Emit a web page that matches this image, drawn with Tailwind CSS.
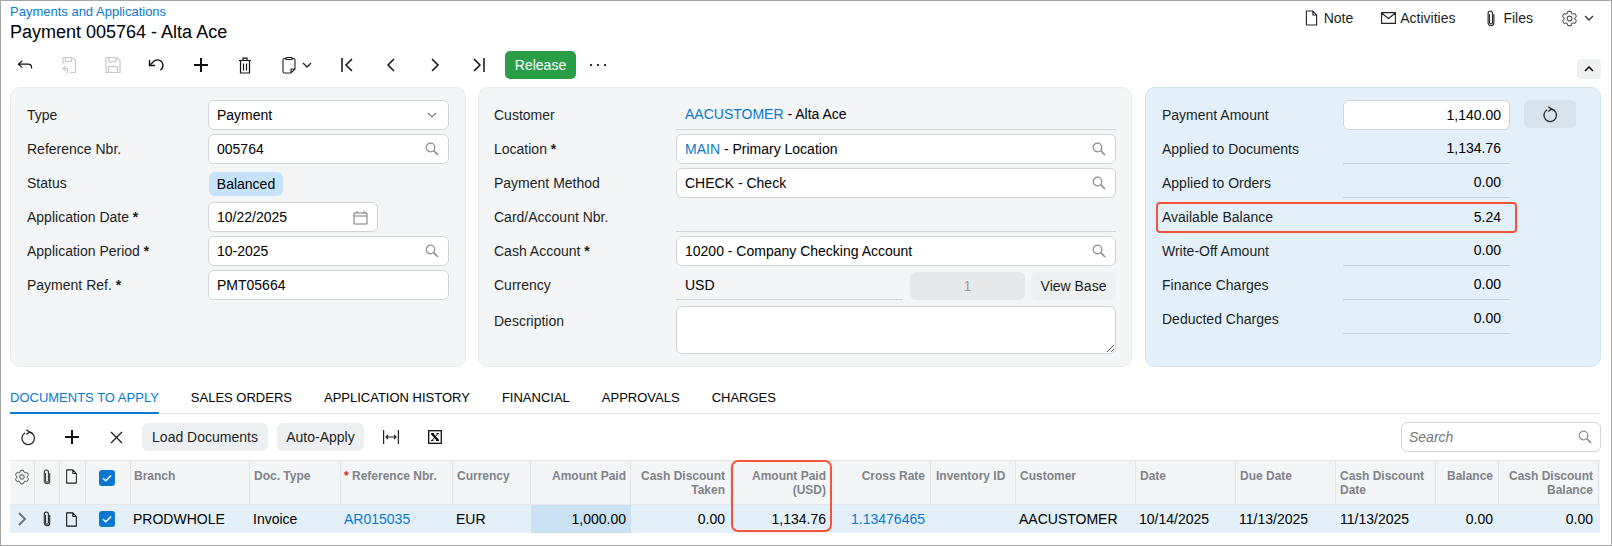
<!DOCTYPE html>
<html>
<head>
<meta charset="utf-8">
<script src="https://cdn.jsdelivr.net/npm/@tailwindcss/browser@4"></script>
<title>Payment 005764</title>
</head>
<body class="bg-white">
<!-- shared icons -->
<svg class="hidden">
    <symbol id="i-search" viewBox="0 0 14 14"><circle cx="5.5" cy="5.5" r="4.300" fill="none" stroke="currentColor" stroke-width="1.200"/><path d="M8.700 8.700 13 13" fill="none" stroke="currentColor" stroke-width="1.700"/></symbol>
    <symbol id="i-doc" viewBox="0 0 14 17"><path d="M1.5 1h7l4 4.2V16h-11zM8.5 1v4.2h4" fill="none" stroke="currentColor" stroke-width="1.2" stroke-linejoin="round"/></symbol>
    <symbol id="i-clip" viewBox="0 0 10 17"><path d="M3.5 4.5v8a1.5 1.5 0 0 0 3 0V3.2a2.2 2.2 0 0 0-4.400 0v9.600a2.900 2.900 0 0 0 5.800 0V4.500" fill="none" stroke="currentColor" stroke-width="1.100" stroke-linecap="round"/></symbol>
    <symbol id="i-gear" viewBox="0 0 24 24"><path d="M9.594 3.94c.09-.542.56-.94 1.11-.94h2.593c.55 0 1.02.398 1.11.94l.213 1.281c.063.374.313.686.645.87.074.04.147.083.22.127.325.196.72.257 1.075.124l1.217-.456a1.125 1.125 0 0 1 1.37.49l1.296 2.247a1.125 1.125 0 0 1-.26 1.431l-1.003.827c-.293.241-.438.613-.43.992a7.723 7.723 0 0 1 0 .255c-.008.378.137.75.43.991l1.004.827c.424.35.534.955.26 1.43l-1.298 2.247a1.125 1.125 0 0 1-1.369.491l-1.217-.456c-.355-.133-.75-.072-1.076.124a6.47 6.47 0 0 1-.22.128c-.331.183-.581.495-.644.869l-.213 1.281c-.09.543-.56.94-1.11.94h-2.594c-.55 0-1.019-.398-1.11-.94l-.213-1.281c-.062-.374-.312-.686-.644-.87a6.52 6.52 0 0 1-.22-.127c-.325-.196-.72-.257-1.076-.124l-1.217.456a1.125 1.125 0 0 1-1.369-.49l-1.297-2.247a1.125 1.125 0 0 1 .26-1.431l1.004-.827c.292-.24.437-.613.43-.991a6.932 6.932 0 0 1 0-.255c.007-.38-.138-.751-.43-.992l-1.004-.827a1.125 1.125 0 0 1-.26-1.43l1.297-2.247a1.125 1.125 0 0 1 1.37-.491l1.216.456c.356.133.751.072 1.076-.124.072-.044.146-.086.22-.128.332-.183.582-.495.644-.869l.214-1.28Z" fill="none" stroke="currentColor" stroke-width="1.300"/><circle cx="12" cy="12" r="3" fill="none" stroke="currentColor" stroke-width="1.300"/></symbol>
    <symbol id="i-refresh" viewBox="0 0 16 16"><path d="M5.200 3.200a6.300 6.300 0 1 0 3.800-.700" fill="none" stroke="currentColor" stroke-width="1.300"/><path d="M6.300 .3 9.500 2.500 6.300 5" fill="none" stroke="currentColor" stroke-width="1.300"/></symbol>
    <symbol id="i-check" viewBox="0 0 16 16"><rect width="16" height="16" rx="3" fill="#0a78d0"/><path d="m4 8.200 2.800 2.600L12 5.400" fill="none" stroke="#fff" stroke-width="1.500"/></symbol>
</svg>

<div class="w-[1612px] h-[546px] border border-[#a6a6a6] overflow-hidden font-['Liberation_Sans',Arial,sans-serif] text-[14px] text-[#1c1f24]">

    <!-- header -->
    <div class="h-[50px] pl-[9px] pr-[17px] flex justify-between items-start">
        <div>
            <a class="block mt-[3px] text-[13px] leading-[16px] text-[#0a78d0]">Payments and Applications</a>
            <h1 class="mt-[1px] text-[18px] leading-[22px] text-black">Payment 005764 - Alta Ace</h1>
        </div>
        <div class="h-[34px] flex items-center">
            <svg class="w-[13px] h-[16px] text-[#222]"><use href="#i-doc"/></svg>
            <span class="ml-[6px]">Note</span>
            <svg class="ml-[28px] w-[15px] h-[12px] text-[#222]" viewBox="0 0 15 12"><path d="M.6.600h13.800v10.800H.6zM.6 1l6.900 5.500L14.400 1" fill="none" stroke="currentColor" stroke-width="1.100"/></svg>
            <span class="ml-[4px]">Activities</span>
            <svg class="ml-[31px] w-[10px] h-[17px] text-[#222]"><use href="#i-clip"/></svg>
            <span class="ml-[7px]">Files</span>
            <svg class="ml-[27px] w-[19px] h-[19px] text-[#555]"><use href="#i-gear"/></svg>
            <svg class="ml-[5px] w-[10px] h-[6px] text-[#333]" viewBox="0 0 10 6"><path d="m1 1 4 4 4-4" fill="none" stroke="currentColor" stroke-width="1.300"/></svg>
        </div>
    </div>

    <!-- main toolbar -->
    <div class="h-[28px] pl-[2px] pr-[10px] flex items-center">
        <button class="w-[44px] flex justify-center"><svg class="w-[16px] h-[14px]" viewBox="0 0 18 16"><path d="M6 3 1.500 7 6 11M1.500 7H13a3.500 3.500 0 0 1 3.500 3.500V12" fill="none" stroke="#111" stroke-width="1.400"/></svg></button>
        <button class="w-[44px] flex justify-center"><svg class="w-[16px] h-[18px]" viewBox="0 0 16 18"><path d="M2 8V1.500h9L14.500 4.500V16.500H9M4.500 1.500v4h6v-4" fill="none" stroke="#c9cbd0" stroke-width="1.200"/><path d="M5 10 2 12.500 5 15M2 12.500h4.500V17" fill="none" stroke="#c9cbd0" stroke-width="1.200"/></svg></button>
        <button class="w-[44px] flex justify-center"><svg class="w-[16px] h-[18px]" viewBox="0 0 16 18"><path d="M1 1.500h10.500L15 4.800V16.500H1zM4 1.500v4.500h7V1.500M3.500 16.500V10.500h9v6" fill="none" stroke="#cbc6cc" stroke-width="1.200"/></svg></button>
        <button class="w-[44px] flex justify-center"><svg class="w-[18px] h-[16px]" viewBox="0 0 18 16"><path d="M1.500 3v5.500H7" fill="none" stroke="#111" stroke-width="1.400"/><path d="M1.800 8.300 5.300 4.800a5.500 5.500 0 1 1 7 8.300" fill="none" stroke="#111" stroke-width="1.400"/></svg></button>
        <button class="w-[44px] flex justify-center"><svg class="w-[16px] h-[16px]" viewBox="0 0 16 16"><path d="M8 1v14M1 8h14" stroke="#111" stroke-width="2"/></svg></button>
        <button class="w-[44px] flex justify-center"><svg class="w-[14px] h-[17px]" viewBox="0 0 14 17"><path d="M1 3.500h12M5 3.500V1.200h4v2.300M2.500 3.500V16h9V3.500M5.500 6.500v7M8.500 6.500v7" fill="none" stroke="#111" stroke-width="1.200"/></svg></button>
        <button class="w-[57px] pl-[15px] flex items-center"><svg class="w-[14px] h-[18px]" viewBox="0 0 14 18"><path d="M4 2.500H2.500A1.500 1.500 0 0 0 1 4v11.500A1.500 1.500 0 0 0 2.500 17H9l4-4V4a1.500 1.500 0 0 0-1.500-1.500H10M4 1.500h6v2H4zM9 17v-4h4" fill="none" stroke="#222" stroke-width="1.100"/></svg><svg class="ml-[6px] w-[10px] h-[6px]" viewBox="0 0 10 6"><path d="m1 1 4 4 4-4" fill="none" stroke="#222" stroke-width="1.300"/></svg></button>
        <button class="w-[45px] flex justify-center"><svg class="w-[14px] h-[14px]" viewBox="0 0 14 14"><path d="M2 0v14M12 1 6 7l6 6" fill="none" stroke="#111" stroke-width="1.500"/></svg></button>
        <button class="w-[44px] pr-[1px] flex justify-center"><svg class="w-[9px] h-[14px]" viewBox="0 0 9 14"><path d="M8 1 2 7l6 6" fill="none" stroke="#111" stroke-width="1.500"/></svg></button>
        <button class="w-[44px] flex justify-center"><svg class="w-[9px] h-[14px]" viewBox="0 0 9 14"><path d="m1 1 6 6-6 6" fill="none" stroke="#111" stroke-width="1.500"/></svg></button>
        <button class="w-[44px] flex justify-center"><svg class="w-[14px] h-[14px]" viewBox="0 0 14 14"><path d="M12 0v14M2 1l6 6-6 6" fill="none" stroke="#111" stroke-width="1.500"/></svg></button>
        <button class="ml-[4px] w-[71px] h-[28px] rounded-[5px] bg-[#2a9d47] text-white text-center">Release</button>
        <button class="w-[44px] flex justify-center gap-[5px]">
            <span class="w-[2px] h-[2px] bg-[#333]"></span><span class="w-[2px] h-[2px] bg-[#333]"></span><span class="w-[2px] h-[2px] bg-[#333]"></span>
        </button>
        <button class="ml-auto self-end w-[24px] h-[20px] rounded-[4px] bg-[#f0f1f3] flex items-center justify-center"><svg class="w-[10px] h-[6px]" viewBox="0 0 10 6"><path d="m1 5 4-4 4 4" fill="none" stroke="#111" stroke-width="1.600"/></svg></button>
    </div>

    <!-- form panels -->
    <div class="mt-[8px] h-[280px] pl-[9px] flex">
        <div class="w-[456px] rounded-[10px] border border-[#eaecef] bg-[#f4f5f7] pl-[16px] pt-[12px]">
            <div class="flex items-center h-[30px] mb-[4px]">
                <span class="w-[181px]">Type</span>
                <div class="w-[241px] h-[30px] pl-[8px] pr-[11px] flex items-center justify-between bg-white border border-[#d2d4d9] rounded-[6px] text-black">Payment<svg class="w-[10px] h-[6px] text-[#777]" viewBox="0 0 10 6"><path d="m1 1 4 4 4-4" fill="none" stroke="currentColor" stroke-width="1.100"/></svg></div>
            </div>
            <div class="flex items-center h-[30px] mb-[4px]">
                <span class="w-[181px]">Reference Nbr.</span>
                <div class="w-[241px] h-[30px] pl-[8px] pr-[9px] flex items-center justify-between bg-white border border-[#d2d4d9] rounded-[6px] text-black">005764<svg class="w-[14px] h-[14px] text-[#8b8f95]"><use href="#i-search"/></svg></div>
            </div>
            <div class="flex items-center h-[30px] mb-[4px]">
                <span class="w-[181px]">Status</span>
                <span class="ml-[1px] mt-[2px] w-[74px] h-[24px] rounded-[6px] bg-[#c5e4fb] text-black flex items-center justify-center">Balanced</span>
            </div>
            <div class="flex items-center h-[30px] mb-[4px]">
                <span class="w-[181px]">Application Date <b>*</b></span>
                <div class="w-[170px] h-[30px] pl-[8px] pr-[9px] flex items-center justify-between bg-white border border-[#d2d4d9] rounded-[6px] text-black">10/22/2025<svg class="w-[15px] h-[15px] text-[#777]" viewBox="0 0 15 15"><path d="M1 3h13v11H1zM1 6h13M4 1v2M11 1v2" fill="none" stroke="currentColor" stroke-width="1"/></svg></div>
            </div>
            <div class="flex items-center h-[30px] mb-[4px]">
                <span class="w-[181px]">Application Period <b>*</b></span>
                <div class="w-[241px] h-[30px] pl-[8px] pr-[9px] flex items-center justify-between bg-white border border-[#d2d4d9] rounded-[6px] text-black">10-2025<svg class="w-[14px] h-[14px] text-[#8b8f95]"><use href="#i-search"/></svg></div>
            </div>
            <div class="flex items-center h-[30px] mb-[4px]">
                <span class="w-[181px]">Payment Ref. <b>*</b></span>
                <div class="w-[241px] h-[30px] pl-[8px] pr-[9px] flex items-center bg-white border border-[#d2d4d9] rounded-[6px] text-black">PMT05664</div>
            </div>
        </div>

        <div class="ml-[12px] w-[654px] rounded-[10px] border border-[#eaecef] bg-[#f4f5f7] pl-[15px] pt-[12px]">
            <div class="flex items-center h-[30px] mb-[4px]">
                <span class="w-[182px]">Customer</span>
                <div class="w-[440px] h-[30px] pl-[9px] flex items-center border-b border-[#d2d4d9] text-black"><a class="text-[#0a78d0]">AACUSTOMER</a>&nbsp;- Alta Ace</div>
            </div>
            <div class="flex items-center h-[30px] mb-[4px]">
                <span class="w-[182px]">Location <b>*</b></span>
                <div class="w-[440px] h-[30px] pl-[8px] pr-[9px] flex items-center justify-between bg-white border border-[#d2d4d9] rounded-[6px] text-black"><span><a class="text-[#0a78d0]">MAIN</a> - Primary Location</span><svg class="w-[14px] h-[14px] text-[#8b8f95]"><use href="#i-search"/></svg></div>
            </div>
            <div class="flex items-center h-[30px] mb-[4px]">
                <span class="w-[182px]">Payment Method</span>
                <div class="w-[440px] h-[30px] pl-[8px] pr-[9px] flex items-center justify-between bg-white border border-[#d2d4d9] rounded-[6px] text-black">CHECK - Check<svg class="w-[14px] h-[14px] text-[#8b8f95]"><use href="#i-search"/></svg></div>
            </div>
            <div class="flex items-center h-[30px] mb-[4px]">
                <span class="w-[182px]">Card/Account Nbr.</span>
                <div class="w-[440px] h-[30px] border-b border-[#d2d4d9]"></div>
            </div>
            <div class="flex items-center h-[30px] mb-[4px]">
                <span class="w-[182px]">Cash Account <b>*</b></span>
                <div class="w-[440px] h-[30px] pl-[8px] pr-[9px] flex items-center justify-between bg-white border border-[#d2d4d9] rounded-[6px] text-black">10200 - Company Checking Account<svg class="w-[14px] h-[14px] text-[#8b8f95]"><use href="#i-search"/></svg></div>
            </div>
            <div class="flex items-end h-[30px] mb-[6px]">
                <span class="w-[182px] self-center">Currency</span>
                <div class="w-[227px] h-[28px] pl-[9px] flex items-center border-b border-[#d2d4d9] text-black">USD</div>
                <div class="ml-[7px] w-[115px] h-[28px] rounded-[6px] bg-[#e7e8ea] text-[#9a9a9a] flex items-center justify-center">1</div>
                <button class="ml-[6px] w-[85px] h-[28px] rounded-[6px] bg-[#eeeff1] text-[#1c1f24]">View Base</button>
            </div>
            <div class="flex items-start">
                <span class="w-[182px] leading-[30px]">Description</span>
                <textarea class="w-[440px] h-[48px] bg-white border border-[#d2d4d9] rounded-[6px]"></textarea>
            </div>
        </div>

        <div class="ml-[13px] w-[456px] rounded-[10px] border border-[#cfe3f1] bg-[#e3f0f9] pl-[16px] pt-[12px]">
            <div class="flex items-start h-[30px] mb-[4px]">
                <span class="w-[181px] leading-[30px]">Payment Amount</span>
                <div class="w-[167px] h-[30px] pr-[8px] flex items-center justify-end bg-white border border-[#d2d4d9] rounded-[6px] text-black">1,140.00</div>
                <button class="ml-[14px] w-[52px] h-[28px] rounded-[5px] bg-[#d8e3ec] flex items-center justify-center"><svg class="w-[16px] h-[17px] text-[#222]"><use href="#i-refresh"/></svg></button>
            </div>
            <div class="flex items-center h-[30px] mb-[4px]">
                <span class="w-[181px]">Applied to Documents</span>
                <div class="w-[167px] h-[30px] pr-[9px] flex items-center justify-end border-b border-[#c6d0d8] text-black">1,134.76</div>
            </div>
            <div class="flex items-center h-[30px] mb-[4px]">
                <span class="w-[181px]">Applied to Orders</span>
                <div class="w-[167px] h-[30px] pr-[9px] flex items-center justify-end border-b border-[#c6d0d8] text-black">0.00</div>
            </div>
            <div class="relative flex items-center h-[30px] mb-[4px]">
                <span class="w-[181px]">Available Balance</span>
                <div class="w-[167px] h-[30px] pr-[9px] flex items-center justify-end text-black">5.24</div>
                <div class="absolute left-[-6px] top-0 w-[361px] h-[31px] border-2 border-[#f4553a] rounded-[4px]"></div>
            </div>
            <div class="flex items-center h-[30px] mb-[4px]">
                <span class="w-[181px]">Write-Off Amount</span>
                <div class="w-[167px] h-[30px] pr-[9px] flex items-center justify-end border-b border-[#c6d0d8] text-black">0.00</div>
            </div>
            <div class="flex items-center h-[30px] mb-[4px]">
                <span class="w-[181px]">Finance Charges</span>
                <div class="w-[167px] h-[30px] pr-[9px] flex items-center justify-end border-b border-[#c6d0d8] text-black">0.00</div>
            </div>
            <div class="flex items-center h-[30px] mb-[4px]">
                <span class="w-[181px]">Deducted Charges</span>
                <div class="w-[167px] h-[30px] pr-[9px] flex items-center justify-end border-b border-[#c6d0d8] text-black">0.00</div>
            </div>
        </div>
    </div>

    <!-- tabs -->
    <div class="mt-[13px] ml-[9px] mr-[11px] h-[34px] flex gap-[32px] border-b border-[#e1e3e6] text-[13px] text-black">
        <a class="h-[34px] pt-[8px] border-b-2 border-[#0a78d0] rounded-b-[1px] text-[#0a78d0]">DOCUMENTS TO APPLY</a>
        <a class="h-[34px] pt-[8px]">SALES ORDERS</a>
        <a class="h-[34px] pt-[8px]">APPLICATION HISTORY</a>
        <a class="h-[34px] pt-[8px]">FINANCIAL</a>
        <a class="h-[34px] pt-[8px]">APPROVALS</a>
        <a class="h-[34px] pt-[8px]">CHARGES</a>
    </div>

    <!-- grid toolbar -->
    <div class="mt-[8px] ml-[5px] mr-[10px] h-[30px] flex items-center">
        <button class="w-[44px] flex justify-center"><svg class="w-[16px] h-[17px] text-[#222]"><use href="#i-refresh"/></svg></button>
        <button class="w-[44px] flex justify-center"><svg class="w-[16px] h-[16px]" viewBox="0 0 16 16"><path d="M8 1v14M1 8h14" stroke="#111" stroke-width="2"/></svg></button>
        <button class="w-[44px] flex justify-center"><svg class="w-[13px] h-[13px]" viewBox="0 0 13 13"><path d="m1 1 11 11M12 1 1 12" stroke="#222" stroke-width="1.400"/></svg></button>
        <button class="ml-[4px] w-[126px] h-[28px] rounded-[6px] bg-[#eeeff1] text-[#1c1f24]">Load Documents</button>
        <button class="ml-[9px] w-[87px] h-[28px] rounded-[6px] bg-[#eeeff1] text-[#1c1f24]">Auto-Apply</button>
        <button class="ml-[5px] w-[44px] flex justify-center"><svg class="w-[16px] h-[14px]" viewBox="0 0 16 14"><path d="M.6 0v14M15.400 0v14M3 7h10M5 5 3 7l2 2M11 5l2 2-2 2" fill="none" stroke="#222" stroke-width="1.200"/></svg></button>
        <button class="w-[44px] flex justify-center"><svg class="w-[14px] h-[14px]" viewBox="0 0 14 14"><rect x=".7" y=".7" width="12.600" height="12.600" fill="none" stroke="#111" stroke-width="1.300"/><path d="m3.800 3.500 6.400 7" stroke="#111" stroke-width="2.400"/><path d="m10 3.500-6 7M3 3.500h3M8.500 3.500h2.500M3 10.500h2.500M8 10.500h3" stroke="#111" stroke-width="1"/></svg></button>
        <div class="ml-auto w-[200px] h-[30px] pl-[7px] pr-[8px] flex items-center justify-between border border-[#d2d4d9] rounded-[6px] italic text-[#777]">Search<svg class="w-[14px] h-[14px] text-[#8b8f95]"><use href="#i-search"/></svg></div>
    </div>

    <!-- grid -->
    <div class="relative mt-[8px] ml-[9px] w-[1590px]">
        <table class="table-fixed w-[1590px] border-separate border-spacing-0 text-left">
            <colgroup>
                <col class="w-[25px]"><col class="w-[25px]"><col class="w-[26px]"><col class="w-[45px]"><col class="w-[119px]"><col class="w-[91px]"><col class="w-[112px]"><col class="w-[78px]"><col class="w-[100px]"><col class="w-[100px]"><col class="w-[100px]"><col class="w-[100px]"><col class="w-[85px]"><col class="w-[120px]"><col class="w-[100px]"><col class="w-[100px]"><col class="w-[100px]"><col class="w-[63px]"><col class="w-[100px]"><col class="w-[1px]">
            </colgroup>
            <thead>
                <tr class="h-[45px] bg-[#f4f5f7] text-[12px] leading-[14px] font-bold text-[#808389]">
                    <th class="align-top pt-[7px] border-y border-r border-[#e4e6e9]"><svg class="ml-[3px] w-[18px] h-[18px] text-[#444]"><use href="#i-gear"/></svg></th>
                    <th class="align-top pt-[8px] border-y border-r border-[#e4e6e9]"><svg class="ml-[7px] w-[10px] h-[16px] text-[#333]"><use href="#i-clip"/></svg></th>
                    <th class="align-top pt-[8px] border-y border-r border-[#e4e6e9]"><svg class="ml-[5px] w-[13px] h-[15px] text-[#222]"><use href="#i-doc"/></svg></th>
                    <th class="align-top pt-[9px] border-y border-r border-[#e4e6e9]"><svg class="ml-[13px] w-[16px] h-[16px]"><use href="#i-check"/></svg></th>
                    <th class="align-top pt-[8px] pl-[3px] font-bold border-y border-r border-[#e4e6e9]">Branch</th>
                    <th class="align-top pt-[8px] pl-[4px] font-bold border-y border-r border-[#e4e6e9]">Doc. Type</th>
                    <th class="align-top pt-[8px] pl-[3px] font-bold border-y border-r border-[#e4e6e9]"><span class="text-[#e02020]">*</span> Reference Nbr.</th>
                    <th class="align-top pt-[8px] pl-[4px] font-bold border-y border-r border-[#e4e6e9]">Currency</th>
                    <th class="align-top pt-[8px] pr-[4px] text-right border-y border-r border-[#e4e6e9]">Amount Paid</th>
                    <th class="align-top pt-[8px] pr-[5px] text-right border-y border-r border-[#e4e6e9]">Cash Discount Taken</th>
                    <th class="align-top pt-[8px] pr-[5px] text-right border-y border-[#e4e6e9]">Amount Paid (USD)</th>
                    <th class="align-top pt-[8px] pr-[5px] text-right border-y border-r border-[#e4e6e9]">Cross Rate</th>
                    <th class="align-top pt-[8px] pl-[5px] border-y border-r border-[#e4e6e9]">Inventory ID</th>
                    <th class="align-top pt-[8px] pl-[4px] border-y border-r border-[#e4e6e9]">Customer</th>
                    <th class="align-top pt-[8px] pl-[4px] border-y border-r border-[#e4e6e9]">Date</th>
                    <th class="align-top pt-[8px] pl-[4px] border-y border-r border-[#e4e6e9]">Due Date</th>
                    <th class="align-top pt-[8px] pl-[4px] border-y border-r border-[#e4e6e9]">Cash Discount Date</th>
                    <th class="align-top pt-[8px] pr-[5px] text-right border-y border-r border-[#e4e6e9]">Balance</th>
                    <th class="align-top pt-[8px] pr-[5px] text-right border-y border-r border-[#e4e6e9]">Cash Discount Balance</th>
                    <th class="border-y border-[#e4e6e9]"></th>
                </tr>
            </thead>
            <tbody>
                <tr class="h-[28px] bg-[#e3f0f9] text-black">
                    <td><svg class="ml-[8px] w-[9px] h-[14px] text-[#6b7380]" viewBox="0 0 9 14"><path d="m1 1 6 6-6 6" fill="none" stroke="currentColor" stroke-width="2"/></svg></td>
                    <td><svg class="ml-[7px] w-[10px] h-[16px] text-[#222]"><use href="#i-clip"/></svg></td>
                    <td><svg class="ml-[5px] w-[13px] h-[15px] text-[#111]"><use href="#i-doc"/></svg></td>
                    <td><svg class="ml-[13px] w-[16px] h-[16px]"><use href="#i-check"/></svg></td>
                    <td class="pl-[2px]">PRODWHOLE</td>
                    <td class="pl-[3px]">Invoice</td>
                    <td class="pl-[3px] text-[#0a78d0]">AR015035</td>
                    <td class="pl-[3px]">EUR</td>
                    <td class="pr-[5px] text-right bg-[#c8e1f3]">1,000.00</td>
                    <td class="pr-[6px] text-right">0.00</td>
                    <td class="pr-[5px] text-right">1,134.76</td>
                    <td class="pr-[6px] text-right text-[#0a78d0]">1.13476465</td>
                    <td></td>
                    <td class="pl-[3px]">AACUSTOMER</td>
                    <td class="pl-[3px]">10/14/2025</td>
                    <td class="pl-[3px]">11/13/2025</td>
                    <td class="pl-[4px]">11/13/2025</td>
                    <td class="pr-[6px] text-right">0.00</td>
                    <td class="pr-[6px] text-right">0.00</td>
                    <td></td>
                </tr>
            </tbody>
        </table>
        <div class="absolute left-[721px] top-0 w-[101px] h-[72px] border-2 border-[#f4553a] rounded-[7px]"></div>
    </div>
</div>
</body>
</html>
